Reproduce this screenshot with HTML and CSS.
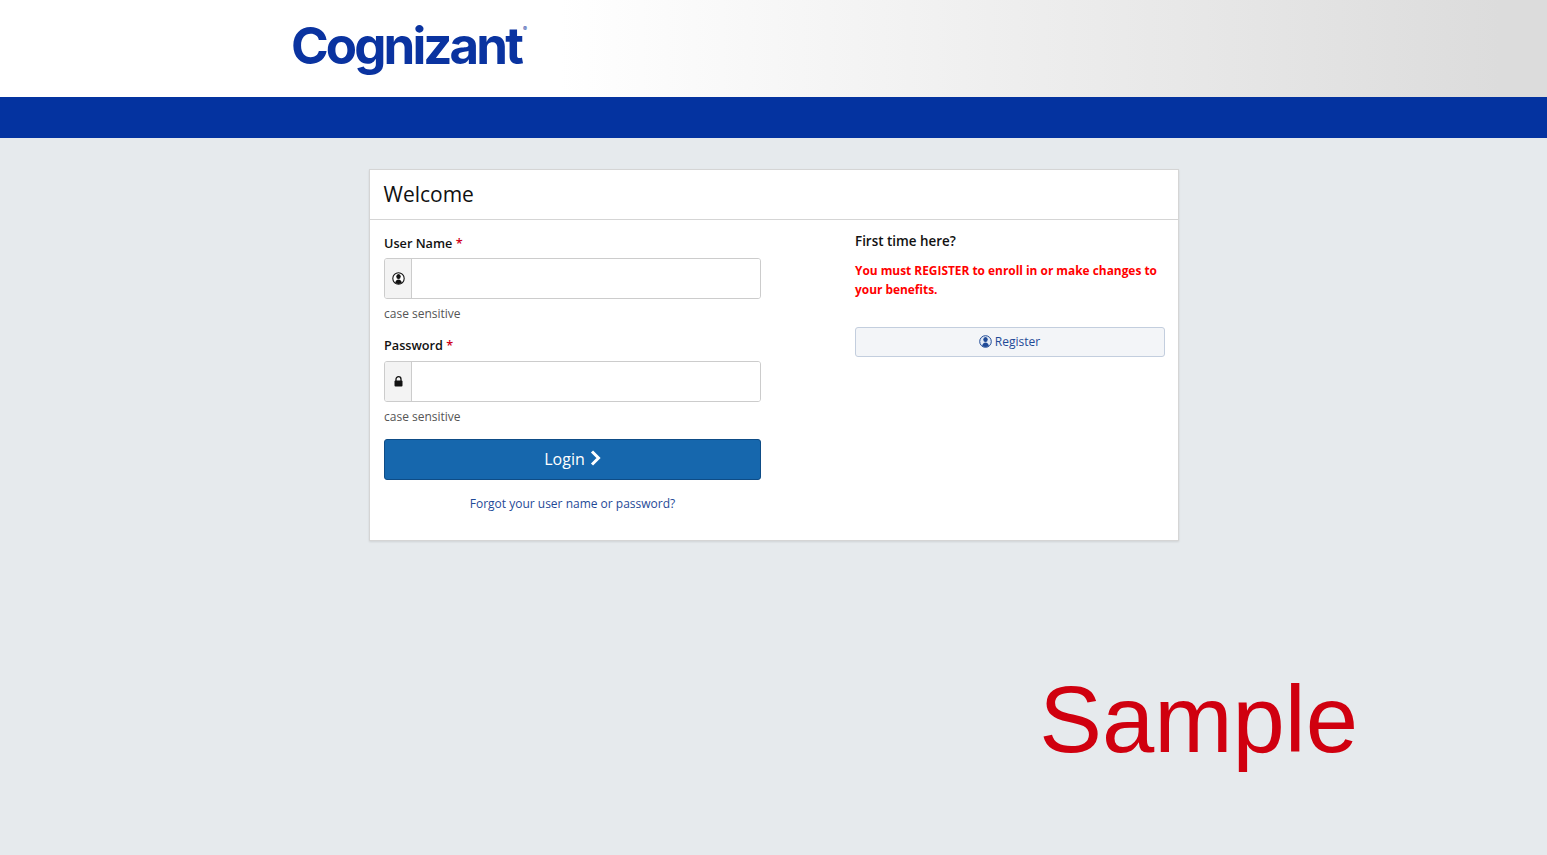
FILE: index.html
```html
<!DOCTYPE html>
<html lang="en">
<head>
  <meta charset="UTF-8">
  <title>Welcome</title>
  <link rel="stylesheet" href="styles.css">
</head>
<body>
  <div class="header-area">
    <div class="logo">Cognizant<span class="logo-mark">®</span></div>
  </div>
  <div class="nav-bar"></div>

  <div class="card">
    <div class="card-title">Welcome</div>
    <div class="card-body">
      <form class="login-col">
        <label class="field-label">User Name <span class="req">*</span></label>
        <div class="input-group">
          <span class="input-addon">
            <svg width="13" height="13" viewBox="0 0 13 13"><circle cx="6.5" cy="6.5" r="5.7" fill="#fff" stroke="#111" stroke-width="1.1"/><ellipse cx="6.5" cy="4.6" rx="2.2" ry="2.5" fill="#111"/><path d="M3.2 11C3.4 8.8 4.8 7.6 6.5 7.6s3.1 1.2 3.3 3.4c-1 .6-2.1.9-3.3.9s-2.3-.3-3.3-.9z" fill="#111"/></svg>
          </span>
          <input class="text-input" type="text">
        </div>
        <div class="hint">case sensitive</div>

        <label class="field-label pass-label">Password <span class="req">*</span></label>
        <div class="input-group">
          <span class="input-addon">
            <svg width="9" height="11" viewBox="0 0 9 11"><path d="M2 5V3.2a2.5 2.5 0 0 1 5 0V5" fill="none" stroke="#111" stroke-width="1.3"/><rect x="0.5" y="4.6" width="8" height="6" rx="1" fill="#111"/></svg>
          </span>
          <input class="text-input" type="password">
        </div>
        <div class="hint">case sensitive</div>

        <button class="login-button" type="button"><span class="login-text">Login</span>
          <svg width="11" height="16" viewBox="0 0 11 16"><path d="M2 1.5 8.5 8 2 14.5" fill="none" stroke="#fff" stroke-width="3"/></svg>
        </button>
        <a class="forgot-link" href="#">Forgot your user name or password?</a>
      </form>

      <div class="register-col">
        <div class="first-time">First time here?</div>
        <p class="notice">You must REGISTER to enroll in or make changes to your benefits.</p>
        <button class="register-button" type="button">
          <svg width="13" height="13" viewBox="0 0 13 13"><circle cx="6.5" cy="6.5" r="5.8" fill="#e4ebf5" stroke="#1f4a97" stroke-width="1"/><ellipse cx="6.5" cy="4.6" rx="2.2" ry="2.5" fill="#1f4a97"/><path d="M3.2 11C3.4 8.8 4.8 7.6 6.5 7.6s3.1 1.2 3.3 3.4c-1 .6-2.1.9-3.3.9s-2.3-.3-3.3-.9z" fill="#1f4a97"/></svg>
          <span class="register-text">Register</span>
        </button>
      </div>
    </div>
  </div>

  <div class="sample-row">
    <div class="sample">Sample</div>
  </div>
</body>
</html>
```

FILE: styles.css
```css
html, body {
  height: 100%;
}
body {
  margin: 0;
  padding: 0;
  font-family: "Open Sans", sans-serif;
  background-color: #e6eaed;
  overflow: hidden;
}
.header-area {
  height: 97px;
  box-sizing: border-box;
  padding: 14px 0 0 291px;
  background: linear-gradient(90deg, #fff 0, #fff 560px, #dcdcdc 1500px, #dcdcdc 100%);
}
.logo {
  display: flex;
  align-items: flex-start;
  font-family: "Inter", sans-serif;
  font-size: 51px;
  font-weight: 700;
  line-height: 64px;
  letter-spacing: -2.9px;
  color: #0a33a0;
}
.logo-mark {
  font-size: 6px;
  font-weight: 400;
  letter-spacing: 0;
  line-height: 6px;
  margin: 12px 0 0 2px;
}
.nav-bar {
  height: 41px;
  background-color: #0433a0;
}
.card {
  width: 810px;
  height: 372px;
  box-sizing: border-box;
  margin: 31px 0 0 369px;
  background-color: #fff;
  border: 1px solid #d5d5d5;
  box-shadow: 0 1px 2px rgba(0, 0, 0, 0.1);
}
.card-title {
  height: 50px;
  box-sizing: border-box;
  padding-left: 13.5px;
  border-bottom: 1px solid #d5d5d5;
  font-size: 21px;
  line-height: 49px;
  color: #111;
}
.card-body {
  display: flex;
  padding: 0 13px 0 14px;
}
.login-col {
  display: flex;
  flex-direction: column;
  width: 377px;
  padding-top: 14px;
}
.field-label {
  font-size: 12.7px;
  font-weight: 600;
  line-height: 19px;
  color: #111;
}
.pass-label {
  margin-top: 13px;
}
.req {
  color: #d0021b;
}
.input-group {
  display: flex;
  height: 41px;
  box-sizing: border-box;
  margin-top: 5px;
  border: 1px solid #ccc;
  border-radius: 3px;
  overflow: hidden;
}
.pass-label + .input-group {
  margin-top: 6px;
}
.input-addon {
  display: flex;
  align-items: center;
  justify-content: center;
  width: 26px;
  flex-shrink: 0;
  background-color: #f3f3f3;
  border-right: 1px solid #ccc;
}
.text-input {
  flex: 1;
  min-width: 0;
  border: none;
  padding: 0 8px;
  background-color: #fff;
}
.hint {
  margin-top: 6px;
  font-size: 12px;
  line-height: 18px;
  color: #555;
}
.login-button {
  display: flex;
  align-items: center;
  justify-content: center;
  gap: 5px;
  height: 41px;
  margin-top: 13px;
  padding: 0;
  font-family: inherit;
  font-size: 16px;
  color: #fff;
  background-color: #1667ad;
  border: 1px solid #0e4c86;
  border-radius: 3px;
  cursor: pointer;
}
.login-text {
  margin-top: -2px;
}
.login-button svg {
  margin-top: -3px;
}
.forgot-link {
  margin-top: 15px;
  font-size: 12px;
  line-height: 18px;
  text-align: center;
  color: #1f4a97;
  text-decoration: none;
}
.register-col {
  width: 310px;
  margin-left: 94px;
  padding-top: 12px;
}
.first-time {
  font-size: 13.4px;
  font-weight: 600;
  line-height: 18px;
  color: #111;
}
.notice {
  margin: 11px 0 0;
  font-size: 11.9px;
  font-weight: 700;
  line-height: 19px;
  color: #f00;
}
.register-button {
  display: flex;
  align-items: center;
  justify-content: center;
  gap: 3px;
  width: 100%;
  height: 30px;
  margin-top: 28px;
  padding: 0 1px 0 0;
  font-family: inherit;
  font-size: 12px;
  color: #1f4a97;
  background-color: #f3f5f8;
  border: 1px solid #c3cede;
  border-radius: 3px;
  cursor: pointer;
}
.register-button svg,
.register-text {
  margin-top: -2px;
}
.sample-row {
  display: flex;
  justify-content: flex-end;
  padding: 124px 189px 0 0;
}
.sample {
  font-family: "Liberation Sans", sans-serif;
  font-size: 94px;
  line-height: 110px;
  color: #d0000f;
}
```
